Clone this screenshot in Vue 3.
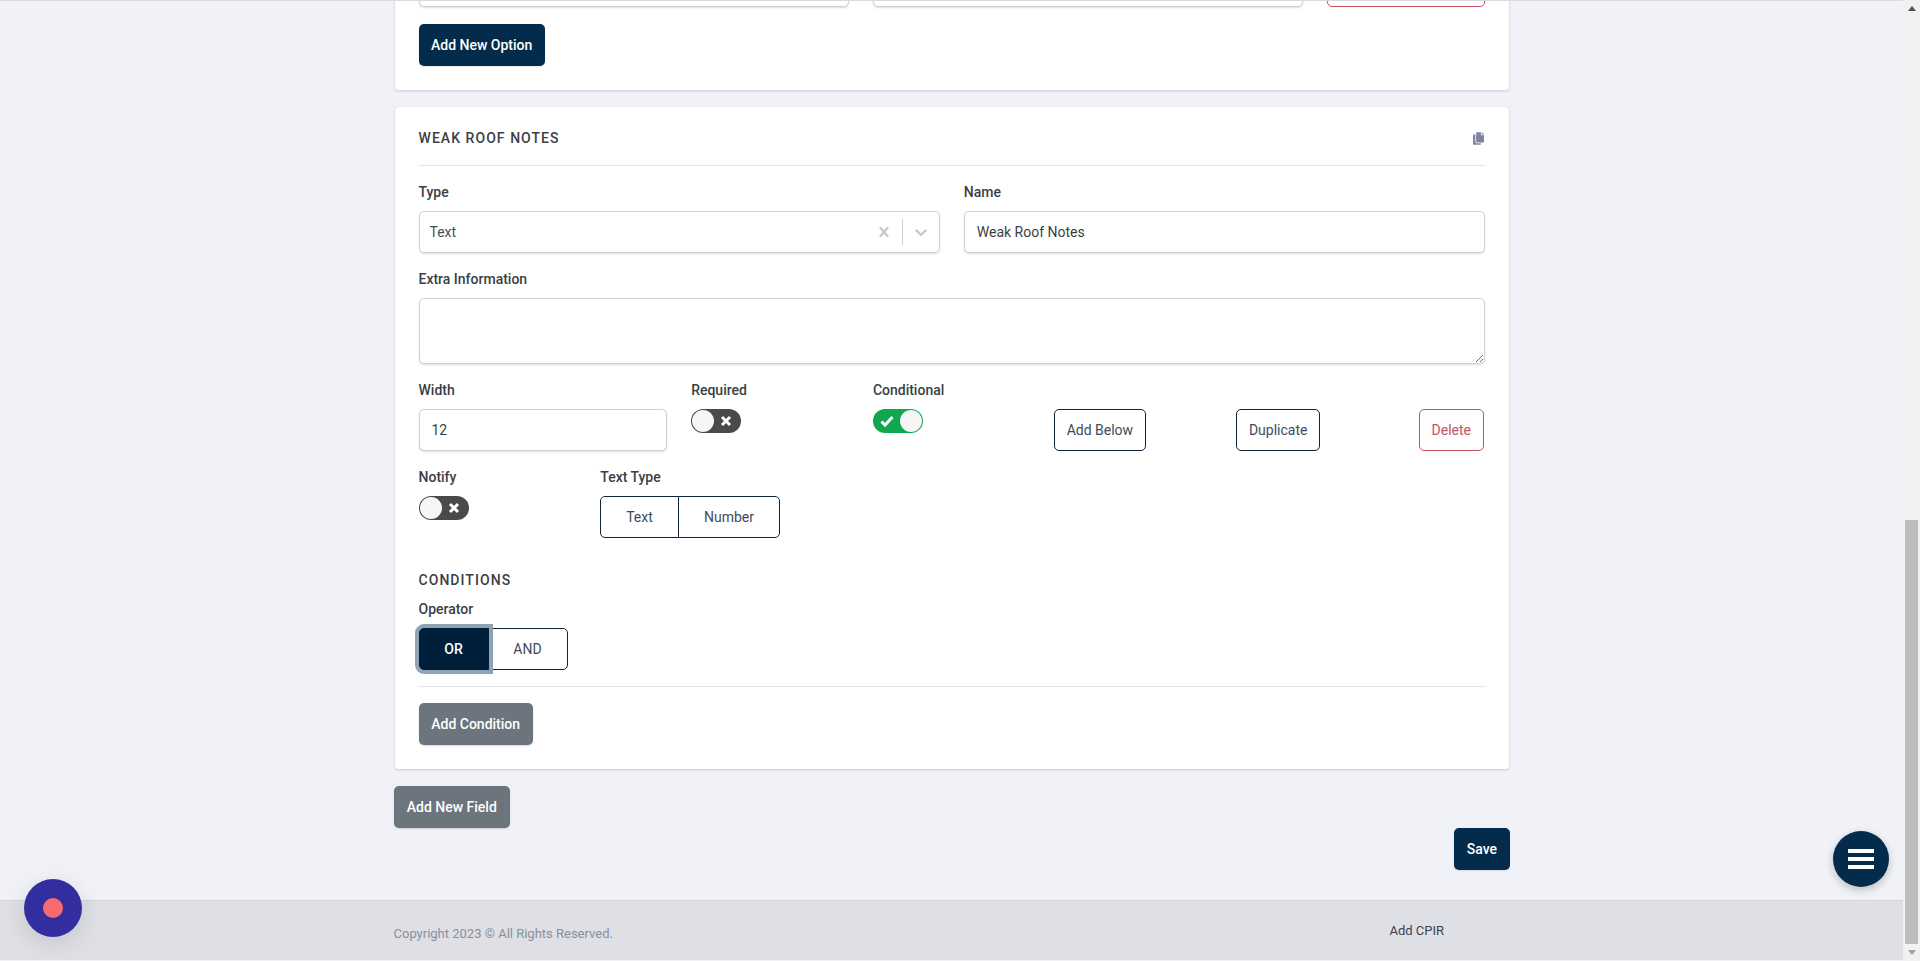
<script setup>
const topColumns = [
  { key: 'a', span: 'span5' },
  { key: 'b', span: 'span5' }
]
</script>

<template>
  <div class="page">
    <div class="main">
      <div class="topline"></div>
      <div class="container">
        <section class="card card-clipped">
          <div class="grid">
            <input v-for="c in topColumns" :key="c.key" class="control" :class="c.span" />
            <button class="btn btn-danger span2" type="button"></button>
          </div>
          <button class="btn btn-primary add-option" type="button">Add New Option</button>
        </section>

        <section class="card">
          <header class="card-head">
            <h2 class="section-title">WEAK ROOF NOTES</h2>
            <svg class="copy-icon" viewBox="0 0 448 512" aria-hidden="true">
              <path fill="currentColor" d="M320 448v40c0 13.255-10.745 24-24 24H24c-13.255 0-24-10.745-24-24V120c0-13.255 10.745-24 24-24h72v296c0 30.879 25.121 56 56 56h168zm0-344V0H152c-13.255 0-24 10.745-24 24v368c0 13.255 10.745 24 24 24h272c13.255 0 24-10.745 24-24V128H344c-13.2 0-24-10.8-24-24zm120.971-31.029L375.029 7.029A24 24 0 0 0 358.059 0H352v96h96v-6.059a24 24 0 0 0-7.029-16.97z"/>
            </svg>
          </header>

          <div class="grid first-row">
            <div class="span6">
              <label class="label">Type</label>
              <div class="select">
                <span class="select-value">Text</span>
                <svg class="sel-icon" viewBox="0 0 20 20" aria-hidden="true">
                  <path fill="currentColor" d="M14.348 14.849c-0.469 0.469-1.229 0.469-1.697 0l-2.651-3.030-2.651 3.029c-0.469 0.469-1.229 0.469-1.697 0-0.469-0.469-0.469-1.229 0-1.697l2.758-3.15-2.759-3.152c-0.469-0.469-0.469-1.228 0-1.697s1.228-0.469 1.697 0l2.652 3.031 2.651-3.031c0.469-0.469 1.228-0.469 1.697 0s0.469 1.229 0 1.697l-2.758 3.152 2.758 3.15c0.469 0.469 0.469 1.229 0 1.698z"/>
                </svg>
                <span class="sel-sep"></span>
                <svg class="sel-icon" viewBox="0 0 20 20" aria-hidden="true">
                  <path fill="currentColor" d="M4.516 7.548c0.436-0.446 1.043-0.481 1.576 0l3.908 3.747 3.908-3.747c0.533-0.481 1.141-0.446 1.574 0 0.436 0.445 0.408 1.197 0 1.615-0.406 0.418-4.695 4.502-4.695 4.502-0.217 0.223-0.502 0.335-0.787 0.335s-0.57-0.112-0.789-0.335c0 0-4.287-4.084-4.695-4.502s-0.436-1.17 0-1.615z"/>
                </svg>
              </div>
            </div>
            <div class="span6">
              <label class="label">Name</label>
              <input class="control" value="Weak Roof Notes" />
            </div>
          </div>

          <div class="field">
            <label class="label">Extra Information</label>
            <textarea class="control textarea"></textarea>
          </div>

          <div class="grid field">
            <div class="span3">
              <label class="label">Width</label>
              <input class="control" value="12" />
            </div>
            <div class="span2">
              <label class="label">Required</label>
              <div class="toggle">
                <span class="knob"></span>
                <svg class="toggle-mark" viewBox="0 0 14 14" aria-hidden="true"><path d="M3 3l8 8M11 3l-8 8"/></svg>
              </div>
            </div>
            <div class="span2">
              <label class="label">Conditional</label>
              <div class="toggle toggle-on">
                <svg class="toggle-mark" viewBox="0 0 14 14" aria-hidden="true"><path d="M1.5 7.5l3.5 3.5 7.5-8"/></svg>
                <span class="knob"></span>
              </div>
            </div>
            <div class="span2 action-cell">
              <button class="btn btn-outline shift-add" type="button">Add Below</button>
            </div>
            <div class="span2 action-cell">
              <button class="btn btn-outline slim-dup" type="button">Duplicate</button>
            </div>
            <div class="span1 action-cell action-end">
              <button class="btn btn-danger" type="button">Delete</button>
            </div>
          </div>

          <div class="grid">
            <div class="span2">
              <label class="label">Notify</label>
              <div class="toggle">
                <span class="knob"></span>
                <svg class="toggle-mark" viewBox="0 0 14 14" aria-hidden="true"><path d="M3 3l8 8M11 3l-8 8"/></svg>
              </div>
            </div>
            <div class="span4">
              <label class="label">Text Type</label>
              <div class="btn-group">
                <button class="seg seg-text" type="button">Text</button>
                <button class="seg seg-number" type="button">Number</button>
              </div>
            </div>
          </div>

          <h3 class="section-title conditions">CONDITIONS</h3>
          <label class="label">Operator</label>
          <div class="btn-group">
            <button class="seg seg-or" type="button">OR</button>
            <button class="seg seg-and" type="button">AND</button>
          </div>
          <hr class="rule" />
          <button class="btn btn-gray" type="button">Add Condition</button>
        </section>

        <div class="after-cards">
          <button class="btn btn-gray" type="button">Add New Field</button>
        </div>
        <div class="save-row">
          <button class="btn btn-primary" type="button">Save</button>
        </div>
      </div>

      <footer class="footer">
        <span class="copyright">Copyright 2023 © All Rights Reserved.</span>
        <span class="footer-link">Add CPIR</span>
      </footer>
    </div>

    <aside class="scrollbar" aria-hidden="true">
      <span class="arrow arrow-up"></span>
      <span class="thumb"></span>
      <span class="arrow arrow-down"></span>
    </aside>

    <button class="chat-bubble" type="button" aria-label="Chat"><span class="chat-dot"></span></button>
    <button class="fab" type="button" aria-label="Menu">
      <span></span><span></span><span></span>
    </button>
  </div>
</template>

<style>
html, body { margin: 0; height: 100%; overflow: hidden; }
</style>

<style scoped>
.page {
  position: relative;
  display: flex;
  height: 961px;
  overflow: hidden;
  background: #f0f2f8;
  font-family: Roboto, "Liberation Sans", sans-serif;
  font-size: 14px;
  color: #343a40;
}
.main {
  flex: 1;
  min-width: 0;
  display: flex;
  flex-direction: column;
}
.topline {
  height: 1px;
  flex: none;
  background: #d8dade;
  position: relative;
  z-index: 2;
}
.container {
  flex: 1;
  width: 1114.5px;
  margin-left: 394.5px;
}
.card {
  background: #fff;
  border-radius: 4px;
  padding: 24px;
  margin-bottom: 17px;
  box-shadow: 0 1px 3px rgba(40, 45, 70, 0.2);
}
.card-clipped {
  margin-top: -36px;
  border-radius: 0 0 4px 4px;
  padding-top: 0;
}
.grid {
  display: grid;
  grid-template-columns: repeat(12, minmax(0, 1fr));
  column-gap: 24px;
}
.span1 { grid-column: span 1; }
.span2 { grid-column: span 2; }
.span3 { grid-column: span 3; }
.span4 { grid-column: span 4; }
.span5 { grid-column: span 5; }
.span6 { grid-column: span 6; }

.add-option { margin-top: 17px; display: block; }

.card-head {
  display: flex;
  justify-content: space-between;
  align-items: center;
  height: 35px;
  padding-bottom: 19px;
  box-sizing: border-box;
  border-bottom: 1px solid #e3e5e9;
  margin-bottom: 16px;
}
.section-title {
  margin: 0;
  font-size: 14px;
  line-height: 15px;
  font-weight: 500;
  letter-spacing: 1.05px;
  color: #3b4046;
}
.copy-icon {
  width: 11px;
  height: 13px;
  margin-right: 1px;
  color: #8084a0;
}
.first-row { margin-bottom: 16px; }
.field { margin-bottom: 16px; }
.label {
  display: block;
  font-weight: 500;
  line-height: 21px;
  margin-bottom: 8px;
  color: #3a3f45;
}
.control {
  display: block;
  width: 100%;
  height: 42px;
  box-sizing: border-box;
  padding: 0 12px;
  border: 1px solid #ced1d6;
  border-radius: 5px;
  background: #fff;
  box-shadow: 0 1px 2px rgba(0, 0, 0, 0.14);
  font: 400 14px Roboto, "Liberation Sans", sans-serif;
  color: #3a3f45;
  outline: none;
}
.textarea {
  height: 66px;
  resize: vertical;
  padding: 8px 12px;
}
.select {
  display: flex;
  align-items: center;
  height: 42px;
  box-sizing: border-box;
  padding: 0 8px 0 10px;
  border: 1px solid #ced1d6;
  border-radius: 5px;
  box-shadow: 0 1px 2px rgba(0, 0, 0, 0.14);
  color: #c9c9c9;
}
.select-value {
  flex: 1;
  color: #4a4f55;
}
.sel-icon {
  width: 20px;
  height: 20px;
}
.sel-sep {
  width: 1px;
  height: 26px;
  margin: 0 8px;
  background: #d0d0d0;
}
.btn {
  height: 42px;
  box-sizing: border-box;
  padding: 0 12px;
  border: 1px solid transparent;
  border-radius: 5px;
  font: 500 14px Roboto, "Liberation Sans", sans-serif;
  cursor: pointer;
  white-space: nowrap;
}
.btn-primary {
  padding: 0 11.5px;
  background: #032b4c;
  color: #fff;
  box-shadow: 0 1px 2px rgba(0, 0, 0, 0.1);
}
.btn-gray {
  padding: 0 11.75px;
  background: #6c757d;
  color: #fff;
  box-shadow: 0 1px 2px rgba(0, 0, 0, 0.15);
}
.btn-outline {
  background: #fff;
  border-color: #0d2438;
  color: #3d4c5c;
  font-weight: 400;
}
.shift-add { margin-left: -1px; }
.slim-dup { padding: 0 11.5px; }
.btn-danger {
  background: #fff;
  border-color: #c94f62;
  color: #bf5361;
  font-weight: 400;
}
.action-cell { padding-top: 29px; }
.action-end {
  display: flex;
  justify-content: flex-end;
  padding-right: 1px;
}
.toggle {
  display: flex;
  align-items: center;
  width: 50px;
  height: 24px;
  box-sizing: border-box;
  padding: 1px;
  border-radius: 12px;
  background: #4a4a4a;
}
.toggle-on {
  background: #0fa84e;
  justify-content: space-between;
}
.knob {
  width: 22px;
  height: 22px;
  flex: none;
  border-radius: 50%;
  background: #f6f6f6;
}
.toggle-mark {
  width: 14px;
  height: 14px;
  margin-left: 5px;
  fill: none;
  stroke: #fff;
  stroke-width: 3;
}
.toggle-on .toggle-mark { margin-left: 6px; }
.btn-group { display: flex; }
.seg {
  height: 42px;
  box-sizing: border-box;
  padding: 0;
  border: 1px solid #0d2438;
  background: #fff;
  color: #3d4c5c;
  font: 400 14px Roboto, "Liberation Sans", sans-serif;
  cursor: pointer;
}
.seg-text, .seg-or {
  border-radius: 5px 0 0 5px;
}
.seg-text { width: 78.5px; }
.seg-number, .seg-and {
  margin-left: -1px;
  border-radius: 0 5px 5px 0;
}
.seg-number { width: 102.5px; }
.seg-or {
  position: relative;
  z-index: 1;
  width: 70px;
  background: #001f3b;
  border-color: #001f3b;
  color: #fff;
  font-weight: 500;
  box-shadow: 0 0 0 4px #8fa3b3;
}
.seg-and { width: 80px; }
.conditions { margin: 35px 0 11px; }
.rule {
  margin: 16px 0;
  border: 0;
  border-top: 1px solid #e3e5e9;
}
.after-cards { margin-left: -0.5px; }
.save-row {
  display: flex;
  justify-content: flex-end;
  margin-right: -0.5px;
}
.footer {
  flex: none;
  display: flex;
  align-items: center;
  height: 60px;
  margin-bottom: 1px;
  box-sizing: border-box;
  padding-left: 393.5px;
  border-top: 1px solid #d3d5da;
  background: #dee0e5;
  font-size: 13px;
}
.copyright {
  width: 996px;
  padding-top: 5px;
  color: #8a8f9c;
}
.footer-link {
  color: #3a4250;
  padding-bottom: 1px;
}
.scrollbar {
  flex: none;
  width: 17px;
  display: flex;
  flex-direction: column;
  align-items: center;
  background: #f1f1f1;
}
.arrow {
  width: 0;
  height: 0;
  flex: none;
  border-left: 4.5px solid transparent;
  border-right: 4.5px solid transparent;
}
.arrow-up {
  margin-top: 6px;
  border-bottom: 5px solid #505050;
}
.thumb {
  flex: none;
  width: 13px;
  height: 424px;
  margin: auto 0 0;
  background: #bdbdbd;
}
.arrow-down {
  margin: 6px 0 6px;
  border-top: 5px solid #a3a3a3;
}
.chat-bubble {
  position: absolute;
  left: 24px;
  top: 879px;
  width: 58px;
  height: 58px;
  display: flex;
  align-items: center;
  justify-content: center;
  padding: 0;
  border: 0;
  border-radius: 50%;
  background: #332e9f;
  box-shadow: 0 6px 24px rgba(0, 0, 0, 0.12);
}
.chat-dot {
  width: 20px;
  height: 20px;
  border-radius: 50%;
  background: #f96a6f;
}
.fab {
  position: absolute;
  left: 1833px;
  top: 831px;
  width: 56px;
  height: 56px;
  display: flex;
  flex-direction: column;
  align-items: center;
  justify-content: center;
  gap: 4px;
  padding: 0;
  border: 0;
  border-radius: 50%;
  background: #032b4c;
  box-shadow: 0 3px 8px rgba(0, 0, 0, 0.22);
}
.fab span {
  width: 26px;
  height: 4px;
  background: #fff;
}
</style>
